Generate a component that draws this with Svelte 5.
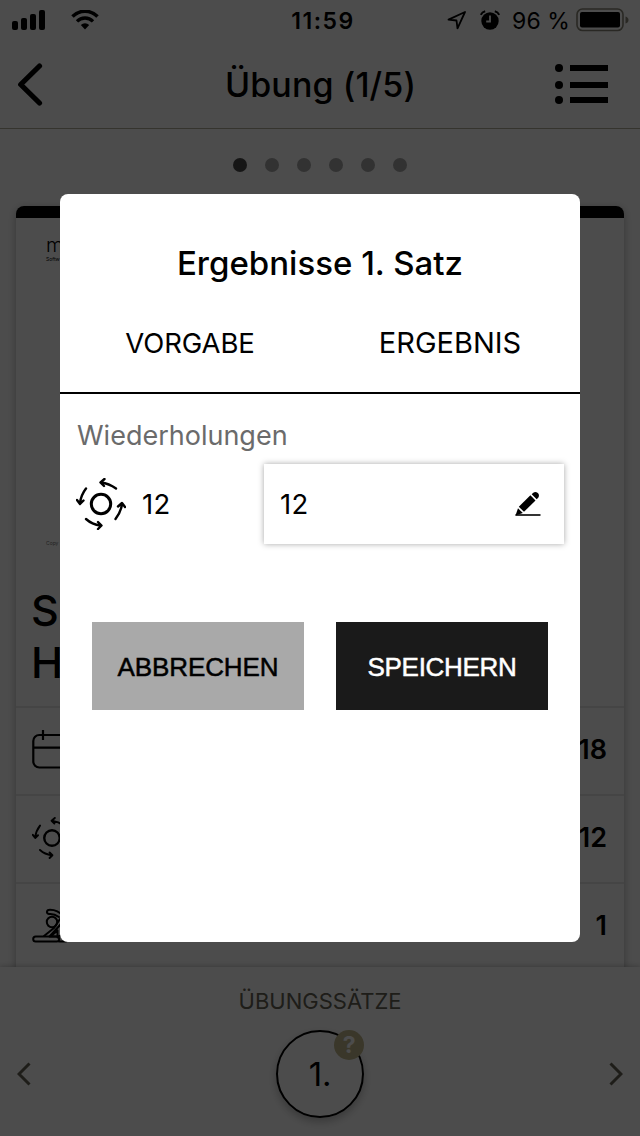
<script lang="ts">
  const dots = [0, 1, 2, 3, 4, 5];
  const signal = [9, 12, 16, 20];
  let activeDot = 0;
  let reps = '12';
</script>

{#snippet repsIcon()}
  <svg class="reps-icon" viewBox="0 0 50 52" fill="none" stroke="#000" stroke-width="2.4" stroke-linecap="round" stroke-linejoin="round">
    <circle cx="25" cy="26" r="9.700" stroke-width="3" />
    <path d="M40 10.500Q33 5.500 25 4.500M28.500 1L24.500 4.500L28 8" />
    <path d="M10 10.500Q5 17 4 25M1 22L4 26L7.500 22.500" />
    <path d="M10 41Q16 46.500 24.500 47.500M22 44L25.500 47.500L22 51" />
    <path d="M39.500 41Q45 34 46 26M42 28.500L46 25L49 29" />
  </svg>
{/snippet}

<div class="screen">
  <div class="status">
    <div class="network">
      <div class="bars">
        {#each signal as h}
          <span style="height:{h}px"></span>
        {/each}
      </div>
      <svg width="28" height="20" viewBox="0 0 28 20">
        <path d="M1.500 6.500A17.500 17.500 0 0 1 26.500 6.500" fill="none" stroke="#000" stroke-width="3.500" />
        <path d="M6 11.300A11.300 11.300 0 0 1 22 11.300" fill="none" stroke="#000" stroke-width="3.300" />
        <path d="M9.800 15A6.200 6.200 0 0 1 18.200 15L14 19.600Z" />
      </svg>
    </div>
    <span class="time">11:59</span>
    <div class="power">
      <svg class="loc" width="20" height="20" viewBox="0 0 20 20" fill="none" stroke="#000" stroke-width="1.800" stroke-linejoin="round">
        <path d="M1.500 9.600L18 2L10.500 18.300L9.500 10.500Z" />
      </svg>
      <svg class="alarm" width="20" height="20" viewBox="0 0 20 20">
        <circle cx="10" cy="11" r="8.700" />
        <path d="M.8 4.800Q2 2 5.200 1.200M19.200 4.800Q18 2 14.800 1.200" stroke="#000" stroke-width="2" fill="none" />
        <path d="M10 5.500V11.500H6.200" stroke="#fff" stroke-width="1.800" fill="none" />
      </svg>
      <span class="percent">96 %</span>
      <svg width="53" height="24" viewBox="0 0 53 24">
        <rect x="1" y="1" width="46" height="21.500" rx="5.500" fill="none" stroke="#8b8878" stroke-width="1.600" />
        <rect x="4" y="4" width="40" height="15.500" rx="2" />
        <path d="M49.500 8.500Q52.500 9.500 52.500 12Q52.500 14.500 49.500 15.500Z" fill="#8b8878" />
      </svg>
    </div>
  </div>

  <header class="nav">
    <svg width="28" height="44" viewBox="0 0 28 44" fill="none" stroke="#000" stroke-width="5.200" stroke-linecap="round" stroke-linejoin="round">
      <path d="M23.500 4L4.700 22.500L23.500 41" />
    </svg>
    <h1>Übung (1/5)</h1>
    <svg width="54" height="40" viewBox="0 0 54 40">
      <circle cx="4" cy="4" r="4" /><path d="M15 1h38v6H15z" />
      <circle cx="4" cy="21" r="4" /><path d="M15 18h38v6H15z" />
      <circle cx="4" cy="36" r="4" /><path d="M15 33h38v6H15z" />
    </svg>
  </header>

  <main>
    <div class="dots">
      {#each dots as d}
        <span class:active={d === activeDot}></span>
      {/each}
    </div>

    <article class="card">
      <div class="media">
        <div>
          <div class="brand">m</div>
          <div class="tagline">Softw</div>
        </div>
        <div class="copy">Copy</div>
      </div>
      <h2>S<br />H</h2>
      <div class="row">
        <svg width="52" height="42" viewBox="0 0 52 42" fill="none" stroke="#000" stroke-width="2.200">
          <rect x="1.300" y="6" width="48" height="32.500" rx="6" />
          <path d="M1.300 18.700H49M11 1V11M40 1V11" />
        </svg>
        <b>18</b>
      </div>
      <div class="row">
        {@render repsIcon()}
        <b>12</b>
      </div>
      <div class="row">
        <svg width="36" height="36" viewBox="0 0 36 36" fill="none" stroke="#000" stroke-width="2" stroke-linecap="round" stroke-linejoin="round">
          <circle cx="20" cy="14" r="5.200" />
          <path d="M27 9Q22 5.500 17 6Q14.500 5.500 15 3.500Q15.500 1.800 18 1.800Q26 1.800 31 8" />
          <path d="M12 28L22 20L28 11M17.500 28.500L29 16M18.500 28.500L25.500 22.500V28.500Z" />
          <rect x="1.200" y="28.500" width="26" height="5" rx="2.500" />
          <path d="M25.500 29.500Q28 26 31 30L34 33.500H27" />
        </svg>
        <b>1</b>
      </div>
    </article>
  </main>

  <footer>
    <p>ÜBUNGSSÄTZE</p>
    <div class="sets">
      <svg width="14" height="24" viewBox="0 0 14 24"><path d="M12.500 1.500L2 12L12.500 22.500" /></svg>
      <div class="set">1.<span class="badge">?</span></div>
      <svg width="14" height="24" viewBox="0 0 14 24"><path d="M1.500 1.500L12 12L1.500 22.500" /></svg>
    </div>
  </footer>

  <div class="backdrop">
    <div class="modal" role="dialog" aria-labelledby="modal-title">
      <h2 id="modal-title">Ergebnisse 1. Satz</h2>
      <div class="columns">
        <span class="target">VORGABE</span>
        <span class="result">ERGEBNIS</span>
      </div>
      <div class="entry">
        <div class="label">Wiederholungen</div>
        <div class="values">
          {@render repsIcon()}
          <span class="given">12</span>
          <div class="field">
            <span>{reps}</span>
            <svg width="26" height="26" viewBox="0 0 26 26">
              <path d="M.5 24H25.500" stroke="#000" stroke-width="1.600" />
              <path d="M3.800 15.800L15.400 4.300L20.500 9.400L9 20.800Z" />
              <path d="M16.700 3.200L18.300 1.700Q20.500 0 22.800 2.100Q24.900 4.300 23.200 6.700L21.700 8.200Z" />
              <path d="M3 17.300L7.800 22L.5 24.500Z" />
            </svg>
          </div>
        </div>
      </div>
      <div class="actions">
        <button class="cancel">ABBRECHEN</button>
        <button class="save">SPEICHERN</button>
      </div>
    </div>
  </div>
</div>

<style>
  :global(body){ margin:0; }
  *{ box-sizing:border-box; }

  .screen{
    position:relative;
    width:640px;
    height:1136px;
    overflow:hidden;
    display:flex;
    flex-direction:column;
    background:#fff;
    color:#000;
    font-family:Inter, "Liberation Sans", sans-serif;
  }
  svg{ display:block; flex:none; }
  h1, h2, p{ margin:0; }

  .status{
    height:40px;
    display:grid;
    grid-template-columns:1fr auto 1fr;
    align-items:center;
    padding:0 11px 0 12px;
  }
  .network{ display:flex; align-items:center; gap:26px; }
  .bars{ display:flex; align-items:flex-end; gap:3px; height:20px; }
  .bars span{ width:6px; background:#000; border-radius:2px; }
  .time{ font-size:23px; font-weight:600; letter-spacing:1.5px; padding:1px 0 0 5px; }
  .power{ display:flex; align-items:center; justify-content:flex-end; }
  .loc{ margin-right:13px; }
  .alarm{ margin-right:12px; }
  .percent{ font-size:23px; letter-spacing:.1px; margin-right:6px; white-space:nowrap; padding-top:1px; }

  .nav{
    height:89px;
    display:flex;
    align-items:center;
    justify-content:space-between;
    padding:0 31px 1px 16px;
    border-bottom:1px solid #b2b09c;
  }
  .nav h1{ font-size:34px; font-weight:500; letter-spacing:.1px; margin:2px 0 0 42px; }

  main{ height:838px; padding:29px 16px 0; overflow:hidden; }
  .dots{ display:flex; justify-content:center; gap:18px; }
  .dots span{ width:14px; height:14px; border-radius:50%; background:#a9a9a9; }
  .dots span.active{ background:#4c4c4c; }

  .card{
    margin-top:34px;
    height:800px;
    border-top:12px solid #000;
    border-radius:8px 8px 0 0;
    box-shadow:0 2px 8px rgba(0,0,0,.3);
  }
  .media{
    height:362px;
    padding:16px 30px 34px;
    display:flex;
    flex-direction:column;
    justify-content:space-between;
  }
  .brand{ font-size:20px; font-weight:300; line-height:22px; height:20px; }
  .tagline{ margin-top:2px; font-size:5px; line-height:6px; }
  .copy{ font-size:5px; color:#777; }
  .card h2{
    height:126px;
    padding:4px 15px 0;
    font-size:43px;
    line-height:52px;
    font-weight:500;
  }
  .row{
    height:88px;
    padding:0 17px 3px 16px;
    display:flex;
    align-items:center;
    justify-content:space-between;
    border-top:2px solid #e6e6e6;
  }
  .row b{ font-size:27px; font-weight:600; }
  .reps-icon{ width:50px; height:52px; }
  .row .reps-icon{ width:40px; height:42px; }

  footer{
    flex:1;
    position:relative;
    background:#fff;
    box-shadow:0 0 6px rgba(0,0,0,.3);
    padding:20px 17px 0;
  }
  footer p{
    text-align:center;
    font-size:22px;
    line-height:28px;
    color:#666354;
  }
  .sets{
    margin-top:15px;
    display:flex;
    align-items:center;
    justify-content:space-between;
  }
  .sets svg{ fill:none; stroke:#666354; stroke-width:3; }
  .set{
    position:relative;
    width:88px;
    height:88px;
    border:2px solid #000;
    border-radius:50%;
    display:flex;
    align-items:center;
    justify-content:center;
    font-size:33px;
    letter-spacing:-.3px;
    box-shadow:0 4px 8px rgba(0,0,0,.25);
  }
  .badge{
    position:absolute;
    top:-2px;
    right:-2px;
    width:30px;
    height:30px;
    border-radius:50%;
    background:#c2b98c;
    color:#fff;
    font-size:23px;
    font-weight:700;
    line-height:30px;
    text-align:center;
  }

  .backdrop{
    position:absolute;
    inset:0;
    display:flex;
    align-items:center;
    justify-content:center;
    background:rgba(0,0,0,.7);
  }
  .modal{
    width:520px;
    height:748px;
    background:#fff;
    border-radius:8px;
  }
  .modal h2{
    padding-top:49px;
    text-align:center;
    font-size:33px;
    line-height:40px;
    font-weight:500;
  }
  .columns{
    display:grid;
    grid-template-columns:1fr 1fr;
    margin-top:39px;
    padding-top:1px;
    height:72px;
    border-bottom:2px solid #000;
    text-align:center;
    line-height:40px;
  }
  .target{ font-size:27.5px; letter-spacing:-.1px; }
  .result{ font-size:29px; }
  .entry{ padding:24px 16px 0; }
  .label{ font-size:27px; line-height:36px; color:#6b6b6b; padding-left:1px; }
  .values{ display:flex; align-items:center; margin-top:10px; }
  .given{ width:122px; margin-left:16px; }
  .given, .field{ font-size:27.5px; letter-spacing:.3px; }
  .field{
    width:300px;
    height:80px;
    padding:0 23px 0 16px;
    display:flex;
    align-items:center;
    justify-content:space-between;
    box-shadow:0 0 6px rgba(0,0,0,.35);
  }
  .actions{ display:flex; gap:32px; padding:78px 32px 0; }
  button{
    width:212px;
    height:88px;
    border:0;
    border-radius:0;
    padding:2px 0 0;
    font-family:"Liberation Sans", Arial, sans-serif;
    font-size:26px;
    letter-spacing:-.1px;
    -webkit-text-stroke:.5px currentColor;
  }
  .cancel{ background:#a9a9a9; color:#000; }
  .save{ background:#1a1a1a; color:#fff; letter-spacing:-.3px; }
</style>
